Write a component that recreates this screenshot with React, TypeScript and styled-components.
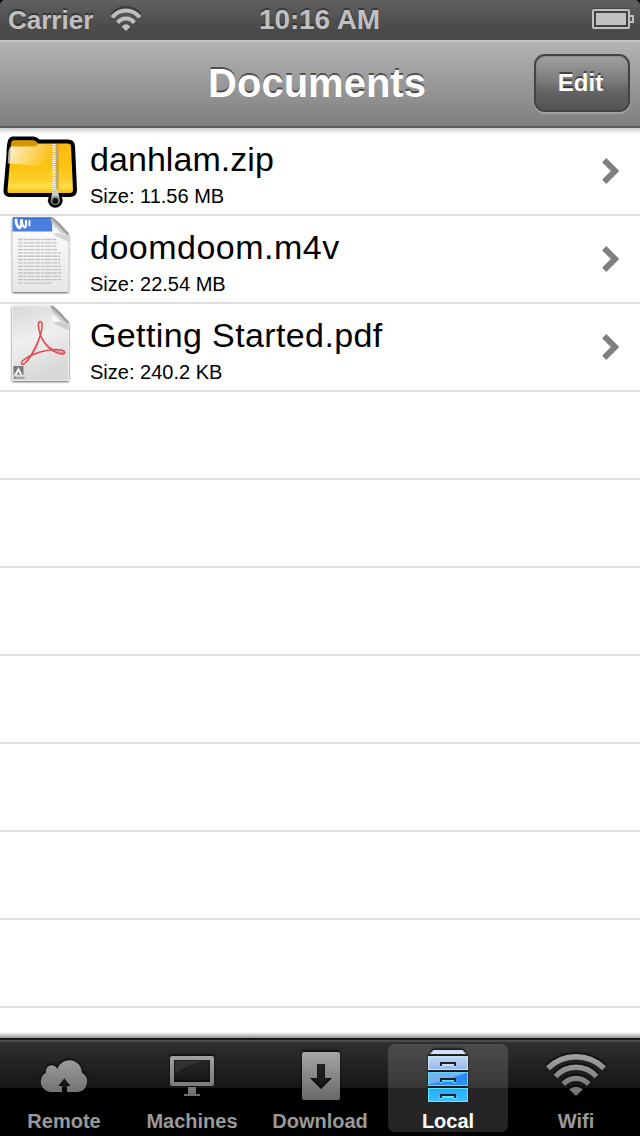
import type { ReactNode } from "react";
import styled, { createGlobalStyle } from "styled-components";

const GlobalStyle = createGlobalStyle`
  body {
    margin: 0;
    background: #000;
    font-family: "Liberation Sans", Arial, sans-serif;
  }

  svg {
    display: block;
    flex: none;
  }
`;

const Screen = styled.div`
  width: 640px;
  height: 1136px;
  display: flex;
  flex-direction: column;
  overflow: hidden;
`;

const StatusBar = styled.header`
  height: 40px;
  display: grid;
  grid-template-columns: 1fr auto 1fr;
  box-sizing: border-box;
  padding: 0 6px 0 8px;
  border-radius: 5px 5px 0 0;
  background: linear-gradient(#606060, #4a4a4a 70%, #494949);
  color: #c0c0c0;
  font-weight: bold;
  text-shadow: 0 -2px 1px rgba(0, 0, 0, 0.38);
`;

const Carrier = styled.div`
  display: flex;
  gap: 15px;
  font-size: 26px;
  line-height: 40px;
`;

const Clock = styled.div`
  padding-right: 3px;
  font-size: 28px;
  line-height: 40px;
  letter-spacing: -0.1px;
`;

const Battery = styled.div`
  display: flex;
  justify-content: flex-end;
`;

const NavBar = styled.nav`
  height: 88px;
  flex: none;
  box-sizing: border-box;
  display: grid;
  grid-template-columns: 106px 1fr 106px;
  align-items: start;
  border-top: 2px solid #c8c8c8;
  border-bottom: 2px solid #5c5c5c;
  background: linear-gradient(#b3b3b3, #7f7f7f);
`;

const Title = styled.h1`
  grid-column: 2;
  margin: 0 6px 0 0;
  color: #fff;
  font-size: 40px;
  line-height: 82px;
  text-align: center;
  text-shadow: 0 -2px 0 rgba(0, 0, 0, 0.5);
`;

const EditButton = styled.button`
  width: 96px;
  height: 58px;
  margin: 12px 0 0;
  padding: 0 3px 0 0;
  border: 2px solid #434343;
  border-radius: 11px;
  background: linear-gradient(#a2a2a2, #777 50%, #646464 65%, #535353);
  background-clip: padding-box;
  box-shadow: 0 2px 0 rgba(255, 255, 255, 0.22), inset 0 1px 2px rgba(0, 0, 0, 0.15);
  color: #fff;
  font: bold 24px / 54px "Liberation Sans", Arial, sans-serif;
  text-shadow: 0 -2px 0 rgba(0, 0, 0, 0.5);
`;

const FileList = styled.ul`
  flex: 1;
  margin: 0;
  padding: 0;
  list-style: none;
  overflow: hidden;
  background:
    linear-gradient(rgba(0, 0, 0, 0.2), transparent) top / 100% 6px no-repeat,
    linear-gradient(transparent, rgba(0, 0, 0, 0.42)) bottom / 100% 6px no-repeat,
    #fff;
`;

const Row = styled.li`
  height: 88px;
  box-sizing: border-box;
  display: flex;
  border-bottom: 2px solid #dfdfdf;
`;

const FileInfo = styled.div`
  flex: 1;
  padding: 11px 0 0 10px;
`;

const FileName = styled.div<{ $tracking: number }>`
  font-size: 34px;
  line-height: 40px;
  letter-spacing: ${(p) => p.$tracking}px;
`;

const FileSize = styled.div`
  margin-top: 5px;
  font-size: 20px;
  line-height: 24px;
`;

const TabBar = styled.footer`
  height: 98px;
  flex: none;
  box-sizing: border-box;
  display: grid;
  grid-template-columns: repeat(5, 128px);
  border-top: 2px solid #151515;
  background: linear-gradient(#4b4b4b 0 2px, #2f2f2f 2px, #161616 48px, #000 48px);
`;

const Tab = styled.div<{ $active?: boolean }>`
  width: 120px;
  height: 88px;
  margin: 4px 4px 0;
  padding-top: 2px;
  box-sizing: border-box;
  display: flex;
  flex-direction: column;
  align-items: center;
  gap: 4px;
  border-radius: 7px;
  background: ${(p) => (p.$active ? "rgba(255, 255, 255, 0.145)" : "transparent")};
  color: ${(p) => (p.$active ? "#fff" : "#999")};
`;

const TabLabel = styled.span`
  font-size: 20px;
  font-weight: bold;
  line-height: 22px;
`;

const SignalIcon = () => (
  <svg width="36" height="40" viewBox="108 0 36 40">
    <g transform="translate(0 -2)" opacity="0.35">
      <path d="M112.3 16.9A17 17 0 0 1 139.7 16.9" fill="none" stroke="#000" strokeWidth="4" />
    </g>
    <g fill="none" stroke="#c0c0c0" strokeWidth="4">
      <path d="M112.3 17.4A17 17 0 0 1 139.7 17.4" />
      <path d="M117.7 22.8A10.3 10.3 0 0 1 134.3 22.8" />
    </g>
    <path d="M121.6 26.7Q126 21.8 130.4 26.7L126 31Z" fill="#c0c0c0" />
  </svg>
);

const BatteryIcon = () => (
  <svg width="44" height="40" viewBox="590 0 44 40">
    <rect x="592" y="8" width="38" height="20" rx="2" fill="#333" opacity="0.5" />
    <rect x="593" y="10" width="36" height="18" rx="1" fill="#424242" stroke="#c0c0c0" strokeWidth="2" />
    <rect x="596" y="13" width="30" height="12" fill="#c0c0c0" />
    <path d="M630 16H633V22H630" fill="none" stroke="#c0c0c0" strokeWidth="2" />
  </svg>
);

const ZipIcon = () => (
  <svg width="80" height="86" viewBox="0 0 80 86">
    <defs>
      <linearGradient id="folder" x1="0" y1="0" x2="0" y2="1">
        <stop offset="0" stopColor="#f9b60c" />
        <stop offset="0.5" stopColor="#fdc313" />
        <stop offset="0.76" stopColor="#fdd02e" />
        <stop offset="0.84" stopColor="#ffe04b" />
        <stop offset="1" stopColor="#f4b709" />
      </linearGradient>
      <linearGradient id="sheen" x1="0" y1="0" x2="1" y2="0.3">
        <stop offset="0" stopColor="#fff" stopOpacity="0.85" />
        <stop offset="1" stopColor="#fff" stopOpacity="0.05" />
      </linearGradient>
    </defs>
    <path
      d="M13 10.5H33.500Q36 10.500 39 13.500H68Q72.500 13.500 73 18L75 62Q75 67 70 67H10Q5 67 5.500 62L8.500 27Q8.500 16 10 13Q11 10.500 13 10.500Z"
      fill="url(#folder)"
      stroke="#000"
      strokeWidth="4"
    />
    <path d="M11 17Q11 12.500 14 12.500H33Q36 12.500 38 15.500L35 18.500H10.500Z" fill="#d99500" />
    <path d="M8.500 24Q9 19 12 18.500H35L39 16H52V27Q45 34 38 38Q24 36 7.700 35.500Z" fill="url(#sheen)" />
    <path d="M55.500 16V62" stroke="#c99310" strokeWidth="7" opacity="0.4" />
    <path d="M54 16V62" stroke="#f4f3ed" strokeWidth="3.600" strokeDasharray="1.500 0.700" />
    <path d="M57 17V62" stroke="#a8a49c" strokeWidth="2.600" strokeDasharray="1.400 0.800" />
    <circle cx="55.300" cy="72.300" r="7.400" fill="#000" />
    <path d="M52.800 61H57.800L59.500 71A4.500 4.500 0 0 1 51 71Z" fill="#c9cccc" />
    <circle cx="55.300" cy="72.500" r="4.600" fill="#8e8e8e" />
    <circle cx="55.300" cy="73" r="2.900" fill="#0b0b0b" />
  </svg>
);

const TEXT_LINES = [56, 57, 56, 58, 61, 60, 61, 60, 62, 61, 62, 61, 62, 52];

const PageCurl = () => (
  <>
    <path d="M52 16L56 20L68.500 26V19Z" fill="#777" opacity="0.28" />
    <path d="M50.500 1.500Q55 2.500 68.500 19Q61 16 52.500 17.500Q53 8 50.500 1.500Z" fill="url(#curl)" />
    <path d="M51 1.500Q56 3.500 68.500 18.500" fill="none" stroke="#858585" strokeWidth="1.200" />
  </>
);

const WordIcon = () => (
  <svg width="80" height="86" viewBox="0 0 80 86">
    <defs>
      <linearGradient id="paper" x1="0" y1="0" x2="0" y2="1">
        <stop offset="0" stopColor="#fff" />
        <stop offset="1" stopColor="#e6e6e6" />
      </linearGradient>
      <linearGradient id="curl" x1="0" y1="1" x2="0.8" y2="0.2">
        <stop offset="0" stopColor="#fff" />
        <stop offset="0.35" stopColor="#fbfbfb" />
        <stop offset="0.65" stopColor="#a9a9a9" />
      </linearGradient>
      <filter id="pageShadow" x="-10%" y="-10%" width="120%" height="120%">
        <feDropShadow dx="0" dy="0.800" stdDeviation="1" floodOpacity="0.75" />
      </filter>
    </defs>
    <path d="M12.500 1.500H51Q56 3.500 68.500 18.500V76H12.500Z" fill="url(#paper)" filter="url(#pageShadow)" />
    <path d="M12.500 1.500H51Q53 8 52.500 15.500H12.500Z" fill="#4a7fe0" />
    <path d="M13 2H51" stroke="#3767bd" />
    <g fill="none" stroke="#fff" strokeLinecap="round">
      <path d="M16 4Q16.500 11 19.500 12Q21.500 11 21.500 4.500" strokeWidth="2.800" />
      <path d="M22 6Q22.500 11 25 11.500Q26.500 10 26 5" strokeWidth="2.200" />
      <path d="M29.500 5V9.500" strokeWidth="1.800" />
    </g>
    <PageCurl />
    <g stroke="#c2c2c2" strokeWidth="1.300" strokeDasharray="5 0.700 3 0.600 7 0.800">
      {TEXT_LINES.map((end, i) => (
        <path key={i} d={`M18 ${23.5 + i * 3.35}H${end}`} />
      ))}
    </g>
  </svg>
);

const PdfIcon = () => (
  <svg width="80" height="86" viewBox="0 0 80 86">
    <defs>
      <linearGradient id="pdfPaper" x1="0" y1="0" x2="0.3" y2="1">
        <stop offset="0" stopColor="#d8d8d8" />
        <stop offset="0.5" stopColor="#efefef" />
        <stop offset="1" stopColor="#d8d8d8" />
      </linearGradient>
    </defs>
    <path
      d="M12.500 2H51Q56 4 68.500 19V76.500H12.500Z"
      fill="url(#pdfPaper)"
      stroke="#f4f4f4"
      strokeWidth="0.800"
      filter="url(#pageShadow)"
    />
    <g transform="translate(0 0.500)">
      <PageCurl />
    </g>
    <g fill="none" stroke="#e2474b" strokeLinejoin="round">
      <path
        d="M40.500 31C38 24 37.500 18 40 17.500C43.500 17 42 25 40.500 31C36 44 29 56 24 60C21 61 20.500 59 23 56.500C31 50 48 44 61 46C66 47 65.500 50 62 50C53 49 44 41 40.500 31Z"
        strokeWidth="1.500"
      />
      <path d="M40.500 28C39 42 31 55 25 59M41 32C45 41 53 47 64 49" strokeWidth="1" opacity="0.65" />
    </g>
    <rect x="13.500" y="62" width="10" height="9" fill="#777" />
    <path d="M14 71L18.500 63L22.500 71H20L18.500 67.500L17 71Z" fill="#eee" />
    <text x="13.500" y="75" fontSize="3.600" fontWeight="bold" fill="#777">Adobe</text>
  </svg>
);

const Chevron = () => (
  <svg width="40" height="86" viewBox="600 128 40 86">
    <path d="M604.200 160.200L615 171L604.200 181.800" fill="none" stroke="#7f7f7f" strokeWidth="6" />
  </svg>
);

// Shared frame for the tab glyphs: grey vertical fade and a dark edge above.
const Glyph = ({ x, children }: { x: number; children: ReactNode }) => (
  <svg width="68" height="60" viewBox={`${x} 1046 68 60`}>
    <defs>
      <linearGradient id={`grey${x}`} gradientUnits="userSpaceOnUse" x1="0" y1="1052" x2="0" y2="1100">
        <stop offset="0" stopColor="#a6a6a6" />
        <stop offset="1" stopColor="#686868" />
      </linearGradient>
      <filter id={`edge${x}`} x="-20%" y="-20%" width="140%" height="140%" colorInterpolationFilters="sRGB">
        <feDropShadow dx="0" dy="-1.500" stdDeviation="1" floodColor="#000" floodOpacity="0.8" />
      </filter>
    </defs>
    <g fill={`url(#grey${x})`} filter={`url(#edge${x})`}>{children}</g>
  </svg>
);

const RemoteIcon = () => (
  <Glyph x={30}>
    <path d="M50.500 1092A10.400 10.400 0 0 1 46 1072.600A6 6 0 0 1 57.300 1068.700A12.700 12.700 0 0 1 82 1072.700A10.400 10.400 0 0 1 77.500 1092H67V1086H70.300L64.400 1078.300L58.300 1086H62V1092Z" />
  </Glyph>
);

const MachinesIcon = () => (
  <Glyph x={158}>
    <path
      fillRule="evenodd"
      d="M172 1056H212Q214 1056 214 1058V1084Q214 1086 212 1086H172Q170 1086 170 1084V1058Q170 1056 172 1056ZM174 1060V1082H210V1060Z"
    />
    <path d="M188 1087H196V1094H200V1096H184V1094H188Z" />
    <path d="M175 1074Q188 1064 204 1061H175Z" fill="#fff" opacity="0.08" />
  </Glyph>
);

const DownloadIcon = () => (
  <Glyph x={286}>
    <path
      fillRule="evenodd"
      d="M304 1052H338Q340 1052 340 1054V1098Q340 1100 338 1100H304Q302 1100 302 1098V1054Q302 1052 304 1052ZM317 1064V1078H310L321 1089L332 1078H325V1064Z"
    />
  </Glyph>
);

const DRAWERS = [
  { y: 1056, top: "#c3d6f5", bottom: "#97b8ec", edge: "#c2e4fd" },
  { y: 1072, top: "#2784f4", bottom: "#2a93f7", edge: "#63d4fb" },
  { y: 1088, top: "#2ca4f9", bottom: "#3bc4fc", edge: "#5ae9fd" },
];

const LocalIcon = () => (
  <Glyph x={414}>
    <path d="M433.500 1050H462.500L466 1054H430Z" fill="#d3e0f6" />
    {DRAWERS.map(({ y, top, bottom, edge }) => (
      <g key={y}>
        <linearGradient id={`drawer${y}`} x1="0" y1="0" x2="0" y2="1">
          <stop offset="0" stopColor={top} />
          <stop offset="1" stopColor={bottom} />
        </linearGradient>
        <rect x="428.500" y={y + 0.5} width="39" height="13" fill={`url(#drawer${y})`} stroke={edge} />
        {y === 1072 && <path d="M429 1073H466Q449 1080 429 1084Z" fill="#76b1ef" />}
        <path d={`M441 ${y + 11}V${y + 8.5}H455V${y + 11}`} fill="none" stroke={edge} strokeWidth="2.500" />
        <path d={`M441 ${y + 10}V${y + 7}H455V${y + 10}`} fill="none" stroke="#222" strokeWidth="2" />
      </g>
    ))}
  </Glyph>
);

const WifiIcon = () => (
  <Glyph x={542}>
    <g fill="none" stroke="url(#grey542)" strokeWidth="5.400">
      <path d="M548 1068.200A40 40 0 0 1 604 1068.200" />
      <path d="M555.600 1076.600A27 27 0 0 1 596.400 1076.600" />
      <path d="M563.300 1084.100A17 17 0 0 1 588.700 1084.100" />
    </g>
    <path d="M569 1089.300Q576 1084 583 1089.300L576 1096Z" />
  </Glyph>
);

const FILES = [
  { name: "danhlam.zip", size: "11.56 MB", tracking: 0.05, icon: <ZipIcon /> },
  { name: "doomdoom.m4v", size: "22.54 MB", tracking: 0.5, icon: <WordIcon /> },
  { name: "Getting Started.pdf", size: "240.2 KB", tracking: 0.38, icon: <PdfIcon /> },
];

const EMPTY_ROWS = 7;

const TABS = [
  { label: "Remote", icon: <RemoteIcon /> },
  { label: "Machines", icon: <MachinesIcon /> },
  { label: "Download", icon: <DownloadIcon /> },
  { label: "Local", icon: <LocalIcon />, active: true },
  { label: "Wifi", icon: <WifiIcon /> },
];

const App = () => {
  return (
    <>
      <GlobalStyle />
      <Screen>
        <StatusBar>
          <Carrier>
            Carrier
            <SignalIcon />
          </Carrier>
          <Clock>10:16 AM</Clock>
          <Battery>
            <BatteryIcon />
          </Battery>
        </StatusBar>
        <NavBar>
          <Title>Documents</Title>
          <EditButton>Edit</EditButton>
        </NavBar>
        <FileList>
          {FILES.map((file) => (
            <Row key={file.name}>
              {file.icon}
              <FileInfo>
                <FileName $tracking={file.tracking}>{file.name}</FileName>
                <FileSize>Size: {file.size}</FileSize>
              </FileInfo>
              <Chevron />
            </Row>
          ))}
          {Array.from({ length: EMPTY_ROWS }, (_, i) => (
            <Row key={i} />
          ))}
        </FileList>
        <TabBar>
          {TABS.map((tab) => (
            <Tab key={tab.label} $active={tab.active}>
              {tab.icon}
              <TabLabel>{tab.label}</TabLabel>
            </Tab>
          ))}
        </TabBar>
      </Screen>
    </>
  );
};

export default App;
